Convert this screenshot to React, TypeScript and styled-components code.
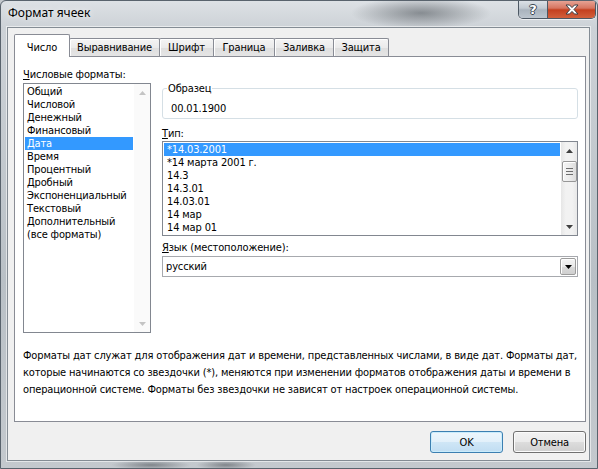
import React from "react";
import styled, { createGlobalStyle, css } from "styled-components";

const GlobalStyle = createGlobalStyle`
  html, body {
    margin: 0;
    padding: 0;
    background: #c3c8cd;
  }
  body {
    font-family: "DejaVu Sans Condensed", "DejaVu Sans", sans-serif;
    font-size: 11px;
    letter-spacing: -0.15px;
    color: #000;
  }
`;

const Window = styled.div`
  width: 598px;
  height: 469px;
  box-sizing: border-box;
  display: flex;
  flex-direction: column;
  overflow: hidden;
  border: 1px solid #59636d;
  border-radius: 6px 6px 0 0;
  background:
    radial-gradient(ellipse 70px 16px at 420px 12px, rgba(70, 76, 82, 0.55), rgba(70, 76, 82, 0)),
    radial-gradient(ellipse 40px 5px at 150px 464px, rgba(60, 66, 72, 0.5), rgba(60, 66, 72, 0)),
    radial-gradient(ellipse 30px 5px at 225px 464px, rgba(60, 66, 72, 0.5), rgba(60, 66, 72, 0)),
    linear-gradient(to bottom, #dde1e5 0px, #cdd2d7 26px, #b9c0c6 60%, #c4c9ce 100%);
`;

const TitleBar = styled.div`
  height: 26px;
  display: flex;
  justify-content: space-between;
  align-items: flex-start;
  padding-left: 7px;
`;

const Title = styled.div`
  font-family: "Noto Sans", "Open Sans", sans-serif;
  font-size: 12px;
  letter-spacing: 0;
  line-height: 16px;
  padding-top: 4px;
  color: #000;
  text-shadow: 0 0 6px rgba(255, 255, 255, 0.9);
`;

const CaptionButtons = styled.div`
  display: flex;
  margin-right: 1px;
  margin-top: -1px;
  border: 1px solid #4d5864;
  border-top: none;
  border-radius: 0 0 5px 5px;
  overflow: hidden;
  box-shadow: 0 1px 0 rgba(255, 255, 255, 0.6);
`;

const CaptionButton = styled.div<{ $close?: boolean }>`
  height: 18px;
  width: ${(p) => (p.$close ? 47 : 28)}px;
  display: flex;
  align-items: center;
  justify-content: center;
  font-family: "DejaVu Sans", sans-serif;
  font-weight: bold;
  font-size: 13px;
  color: #fff;
  text-shadow: 1px 0 0 #3b4752, -1px 0 0 #3b4752, 0 1px 0 #3b4752, 0 -1px 0 #3b4752;
  background: ${(p) =>
    p.$close
      ? "linear-gradient(to bottom, #e9a99b 0%, #d77560 45%, #c4401f 55%, #d2603c 100%)"
      : "linear-gradient(to bottom, #dfe4e9 0%, #c2cad2 45%, #a9b3bd 55%, #bcc5ce 100%)"};
  border-left: ${(p) => (p.$close ? "1px solid #4d5864" : "none")};
`;

const Client = styled.div`
  flex: 1;
  margin: 0 7px 7px 6px;
  display: flex;
  flex-direction: column;
  background: #f0f0f0;
  border: 1px solid #848c94;
  box-shadow: 0 0 0 1px rgba(255, 255, 255, 0.55);
  padding: 6px 3px 0 6px;
`;

const TabStrip = styled.div`
  display: flex;
  align-items: flex-end;
  height: 22px;
`;

const Tab = styled.div<{ $active?: boolean; $width: number }>`
  box-sizing: border-box;
  width: ${(p) => p.$width}px;
  height: 18px;
  margin-left: -1px;
  display: flex;
  align-items: center;
  justify-content: center;
  border: 1px solid #898c95;
  border-bottom: none;
  border-radius: 2px 2px 0 0;
  background: linear-gradient(to bottom, #f4f4f4 0%, #ebebeb 50%, #dedede 51%, #e5e5e5 100%);
  box-shadow: inset 1px 1px 0 #fff;
  white-space: nowrap;
  &:first-child {
    margin-left: 0;
  }
  ${(p) =>
    p.$active &&
    css`
      position: relative;
      z-index: 1;
      height: 23px;
      margin-bottom: -1px;
      padding-top: 2px;
      background: #fff;
      box-shadow: none;
    `}
`;

const Panel = styled.div`
  height: 366px;
  box-sizing: border-box;
  background: #fff;
  border: 1px solid #898c95;
  padding: 11px 7px 0 8px;
  display: flex;
  flex-direction: column;
`;

const Columns = styled.div`
  display: flex;
  gap: 11px;
`;

const LeftColumn = styled.div`
  width: 128px;
  display: flex;
  flex-direction: column;
`;

const RightColumn = styled.div`
  flex: 1;
  display: flex;
  flex-direction: column;
`;

const Label = styled.div<{ $top?: number }>`
  height: 13px;
  line-height: 13px;
  margin-top: ${(p) => p.$top ?? 0}px;
  margin-bottom: 2px;
  white-space: nowrap;
  u {
    text-decoration: underline;
    text-underline-offset: 1px;
  }
`;

const ListBox = styled.div<{ $height: number; $top?: number }>`
  box-sizing: border-box;
  height: ${(p) => p.$height}px;
  margin-top: ${(p) => p.$top ?? 0}px;
  display: flex;
  border: 1px solid #828790;
  background: #fff;
`;

const ListItems = styled.div`
  flex: 1;
  min-width: 0;
  padding: 1px;
`;

const ListItem = styled.div<{ $selected?: boolean; $indent: number }>`
  height: 13px;
  line-height: 13px;
  padding-left: ${(p) => p.$indent}px;
  white-space: nowrap;
  ${(p) =>
    p.$selected &&
    css`
      background: #3399ff;
      color: #fff;
    `}
`;

const ScrollBar = styled.div<{ $disabled?: boolean }>`
  width: 16px;
  display: flex;
  flex-direction: column;
  background: ${(p) =>
    p.$disabled
      ? "#fafafa"
      : "linear-gradient(to right, #e6e6e6 0%, #f2f2f2 30%, #f2f2f2 70%, #e8e8e8 100%)"};
`;

const ScrollArrow = styled.div`
  height: 17px;
  display: flex;
  align-items: center;
  justify-content: center;
`;

const ScrollTrack = styled.div`
  flex: 1;
  display: flex;
  flex-direction: column;
  align-items: center;
`;

const Thumb = styled.div`
  box-sizing: border-box;
  width: 15px;
  height: 21px;
  margin-top: 2px;
  display: flex;
  align-items: center;
  justify-content: center;
  border: 1px solid #979797;
  border-radius: 2px;
  background: linear-gradient(to right, #f5f5f5 0%, #ececec 50%, #dcdcdc 100%);
  box-shadow: inset 1px 1px 0 #fff;
`;

const GroupBox = styled.fieldset`
  margin: 14px 0 0 0;
  padding: 0 8px 3px 8px;
  border: 1px solid #d5dfe5;
  border-radius: 3px;
  min-width: 0;
`;

const Legend = styled.legend`
  margin-left: -4px;
  padding: 0 1px;
  line-height: 13px;
`;

const SampleValue = styled.div`
  padding-top: 7px;
  line-height: 13px;
`;

const Combo = styled.div`
  box-sizing: border-box;
  height: 21px;
  display: flex;
  align-items: center;
  justify-content: space-between;
  border: 1px solid #a7a9ae;
  padding: 0 1px 0 3px;
  background: #fff;
`;

const DropButton = styled.div`
  box-sizing: border-box;
  width: 16px;
  height: 17px;
  display: flex;
  align-items: center;
  justify-content: center;
  border: 1px solid #9c9c9c;
  border-radius: 2px;
  background: linear-gradient(to bottom, #f4f4f4 0%, #e9e9e9 50%, #d9d9d9 51%, #d0d0d0 100%);
  box-shadow: inset 1px 1px 0 #fff;
`;

const Description = styled.div`
  margin-top: 14px;
  line-height: 17px;
  white-space: nowrap;
`;

const Footer = styled.div`
  display: flex;
  justify-content: flex-end;
  gap: 10px;
  margin-top: 9px;
  padding-right: 0px;
`;

const Button = styled.button<{ $default?: boolean }>`
  width: 73px;
  height: 22px;
  padding: 0;
  font: inherit;
  letter-spacing: inherit;
  color: #000;
  border-radius: 3px;
  border: 1px solid #707070;
  background: linear-gradient(to bottom, #f2f2f2 0%, #ebebeb 50%, #dddddd 51%, #cfcfcf 100%);
  box-shadow: inset 0 0 0 1px #fbfbfb;
  ${(p) =>
    p.$default &&
    css`
      border-color: #3c7fb1;
      background: linear-gradient(to bottom, #edf6fc 0%, #e2f0fa 50%, #cfe6f6 51%, #c0ddf2 100%);
      box-shadow: inset 0 0 0 1px #c9ecfc;
    `}
`;

const Arrow = ({ dir, color }: { dir: "up" | "down"; color: string }) => (
  <svg width="7" height="4" viewBox="0 0 7 4">
    <path d={dir === "up" ? "M0 4 L3.5 0 L7 4 Z" : "M0 0 L3.5 4 L7 0 Z"} fill={color} />
  </svg>
);

const Grip = () => (
  <svg width="7" height="7" viewBox="0 0 7 7">
    <path d="M0 0.5 H7 M0 3.5 H7 M0 6.5 H7" stroke="#6d6d6d" strokeWidth="1" />
  </svg>
);

const CloseGlyph = () => (
  <svg width="14" height="11" viewBox="0 0 14 11">
    <path
      d="M1 1 H4.5 L7 3.6 L9.5 1 H13 L9 5.5 L13 10 H9.5 L7 7.4 L4.5 10 H1 L5 5.5 Z"
      fill="#fff"
      stroke="#3b3f45"
      strokeWidth="1"
      strokeLinejoin="round"
    />
  </svg>
);

const categories = [
  "Общий",
  "Числовой",
  "Денежный",
  "Финансовый",
  "Дата",
  "Время",
  "Процентный",
  "Дробный",
  "Экспоненциальный",
  "Текстовый",
  "Дополнительный",
  "(все форматы)",
];

const types = [
  "*14.03.2001",
  "*14 марта 2001 г.",
  "14.3",
  "14.3.01",
  "14.03.01",
  "14 мар",
  "14 мар 01",
];

const tabs = [
  { label: "Число", width: 56 },
  { label: "Выравнивание", width: 91 },
  { label: "Шрифт", width: 55 },
  { label: "Граница", width: 62 },
  { label: "Заливка", width: 60 },
  { label: "Защита", width: 56 },
];

export default function App() {
  return (
    <>
      <GlobalStyle />
      <Window>
        <TitleBar>
          <Title>Формат ячеек</Title>
          <CaptionButtons>
            <CaptionButton>?</CaptionButton>
            <CaptionButton $close>
              <CloseGlyph />
            </CaptionButton>
          </CaptionButtons>
        </TitleBar>
        <Client>
          <TabStrip>
            {tabs.map((t, i) => (
              <Tab key={t.label} $width={t.width} $active={i === 0}>
                {t.label}
              </Tab>
            ))}
          </TabStrip>
          <Panel>
            <Columns>
              <LeftColumn>
                <Label>
                  <u>Ч</u>исловые форматы:
                </Label>
                <ListBox $height={250}>
                  <ListItems>
                    {categories.map((c) => (
                      <ListItem key={c} $indent={2} $selected={c === "Дата"}>
                        {c}
                      </ListItem>
                    ))}
                  </ListItems>
                  <ScrollBar $disabled>
                    <ScrollArrow>
                      <Arrow dir="up" color="#c4c4c4" />
                    </ScrollArrow>
                    <ScrollTrack />
                    <ScrollArrow>
                      <Arrow dir="down" color="#c4c4c4" />
                    </ScrollArrow>
                  </ScrollBar>
                </ListBox>
              </LeftColumn>
              <RightColumn>
                <GroupBox>
                  <Legend>Образец</Legend>
                  <SampleValue>00.01.1900</SampleValue>
                </GroupBox>
                <Label $top={8}>
                  <u>Т</u>ип:
                </Label>
                <ListBox $height={95} $top={-1}>
                  <ListItems>
                    {types.map((t, i) => (
                      <ListItem key={t} $indent={3} $selected={i === 0}>
                        {t}
                      </ListItem>
                    ))}
                  </ListItems>
                  <ScrollBar>
                    <ScrollArrow>
                      <Arrow dir="up" color="#404040" />
                    </ScrollArrow>
                    <ScrollTrack>
                      <Thumb>
                        <Grip />
                      </Thumb>
                    </ScrollTrack>
                    <ScrollArrow>
                      <Arrow dir="down" color="#404040" />
                    </ScrollArrow>
                  </ScrollBar>
                </ListBox>
                <Label $top={5}>
                  <u>Я</u>зык (местоположение):
                </Label>
                <Combo>
                  <span>русский</span>
                  <DropButton>
                    <Arrow dir="down" color="#000" />
                  </DropButton>
                </Combo>
              </RightColumn>
            </Columns>
            <Description>
              Форматы дат служат для отображения дат и времени, представленных числами, в виде дат. Форматы дат,
              <br />
              которые начинаются со звездочки (*), меняются при изменении форматов отображения даты и времени в
              <br />
              операционной системе. Форматы без звездочки не зависят от настроек операционной системы.
            </Description>
          </Panel>
          <Footer>
            <Button $default>OK</Button>
            <Button>Отмена</Button>
          </Footer>
        </Client>
      </Window>
    </>
  );
}
